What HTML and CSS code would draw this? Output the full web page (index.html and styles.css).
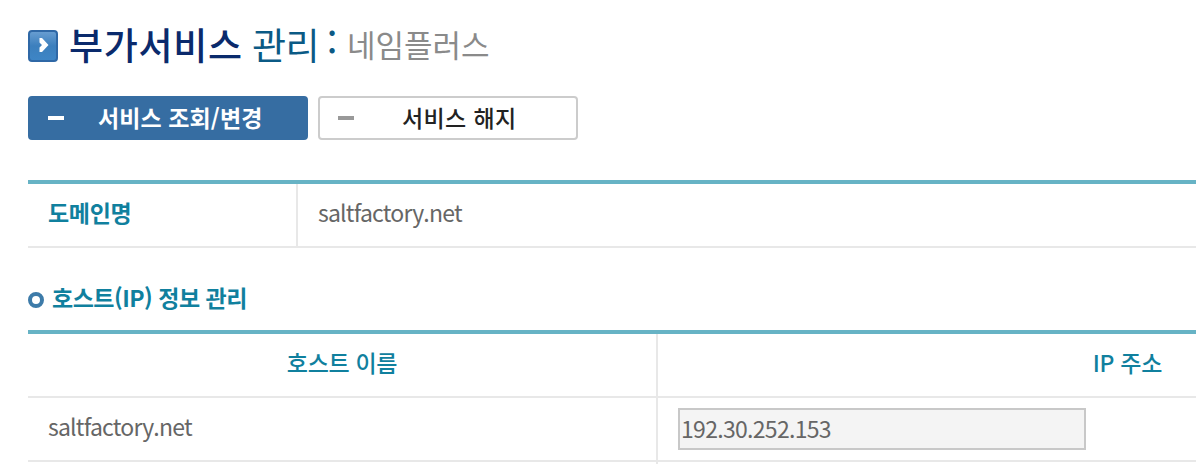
FILE: index.html
```html
<!DOCTYPE html>
<html lang="ko">
<head>
  <meta charset="UTF-8" />
  <meta name="viewport" content="width=device-width, initial-scale=1.0" />
  <title>부가서비스 관리 : 네임플러스</title>
  <link rel="stylesheet" href="styles.css">
</head>
<body>

  <div class="content">
    <h1 class="title">
      <svg class="title-icon" width="30" height="32" viewBox="0 0 30 32">
        <defs>
          <linearGradient id="blue" x1="0" y1="0" x2="0" y2="1">
            <stop offset="0" stop-color="#6a9fd2" />
            <stop offset="0.5" stop-color="#3c7fbd" />
            <stop offset="1" stop-color="#3e86c6" />
          </linearGradient>
        </defs>
        <rect x="1" y="1" width="28" height="30" rx="3" fill="url(#blue)" stroke="#2f68a6" stroke-width="2" />
        <path d="M11.5 8 H14 L20.5 15 L14 22 H11.5 V17.5 L14 15 L11.5 12.5 Z" fill="#fff" />
      </svg>
      <span class="title-service">부가서비스</span>
      <span class="title-manage">관리</span>
      <span class="title-colon">:</span>
      <span class="title-name">네임플러스</span>
    </h1>

    <div class="tabs">
      <a class="tab tab-on"><i class="dash"></i><span>서비스 조회/변경</span></a>
      <a class="tab"><i class="dash"></i><span>서비스 해지</span></a>
    </div>

    <table class="table domain">
      <tr>
        <th>도메인명</th>
        <td>saltfactory.net</td>
      </tr>
    </table>

    <h2 class="subtitle"><i class="bullet"></i><span>호스트(IP) 정보 관리</span></h2>

    <table class="table host">
      <tr>
        <th>호스트 이름</th>
        <th class="address">IP 주소</th>
      </tr>
      <tr>
        <td>saltfactory.net</td>
        <td class="field"><input class="ip" type="text" value="192.30.252.153" readonly /></td>
      </tr>
      <tr class="tail">
        <td></td>
        <td></td>
      </tr>
    </table>
  </div>

</body>
</html>
```
FILE: styles.css
```css
html, body {
  margin: 0;
  padding: 0;
}

body {
  font-family: "Noto Sans CJK KR", sans-serif;
  background: #fff;
  color: #666;
}

.content {
  padding: 22px 0 0 28px;
}

.title {
  display: flex;
  align-items: center;
  height: 48px;
  margin: 0;
  font-size: 37px;
  line-height: 44px;
  white-space: nowrap;
}

.title span {
  padding-bottom: 4px;
}

.title-icon {
  display: block;
}

.title-service {
  width: 183px;
  margin-left: 11px;
  font-weight: 500;
  letter-spacing: 0.7px;
  color: #0a2a6c;
}

.title-manage {
  width: 75px;
  font-weight: 400;
  letter-spacing: -0.5px;
  color: #0b5a85;
}

.title .title-colon {
  width: 20px;
  padding-bottom: 8px;
  font-size: 34px;
  font-weight: 500;
  color: #0b5a85;
}

.title-name {
  font-size: 31px;
  font-weight: 400;
  color: #8a8a8a;
}

.tabs {
  display: flex;
  gap: 10px;
  margin-top: 26px;
}

.tab {
  box-sizing: border-box;
  display: flex;
  align-items: center;
  width: 260px;
  height: 44px;
  padding-left: 18px;
  border: 2px solid #ccc;
  border-radius: 4px;
  font-size: 23px;
  font-weight: 500;
  letter-spacing: 0.4px;
  line-height: 30px;
  color: #222;
}

.tab span {
  margin-left: 48px;
  padding-bottom: 2px;
}

.tab-on {
  width: 280px;
  border-color: #366da2;
  background: #366da2;
  font-weight: 700;
  letter-spacing: 0.1px;
  color: #fff;
}

.tab-on span {
  margin-left: 34px;
}

.dash {
  width: 16px;
  height: 4px;
  background: #999;
}

.tab-on .dash {
  background: #fff;
}

.table {
  width: 100%;
  border-top: 4px solid #67b3c5;
  border-spacing: 0;
  table-layout: fixed;
}

.table th,
.table td {
  box-sizing: border-box;
  height: 64px;
  padding: 0 20px 7px;
  border-bottom: 2px solid #e8e8e8;
  font-size: 23px;
  line-height: 30px;
}

.table th {
  letter-spacing: -0.3px;
  color: #10809e;
}

.table td {
  font-weight: 400;
  letter-spacing: -0.8px;
}

.table th:first-child,
.table td:first-child {
  border-right: 2px solid #e8e8e8;
}

.domain {
  margin-top: 40px;
}

.domain th {
  width: 270px;
  text-align: left;
}

.host th {
  font-weight: 500;
}

.host th:first-child {
  width: 630px;
}

.host .address {
  padding-right: 34px;
  text-align: right;
}

.host .field {
  padding-bottom: 0;
}

.host .tail td {
  height: 2px;
  padding: 0;
  border-bottom: 0;
}

.subtitle {
  display: flex;
  align-items: center;
  height: 36px;
  margin: 32px 0 14px;
  font-size: 23px;
  letter-spacing: -0.5px;
  line-height: 34px;
  color: #10809e;
}

.subtitle span {
  padding-bottom: 2px;
}

.bullet {
  box-sizing: border-box;
  width: 16px;
  height: 16px;
  margin: 3px 8px 0 0;
  border: 4px solid #3d7ba9;
  border-radius: 50%;
}

.ip {
  box-sizing: border-box;
  display: block;
  width: 408px;
  height: 42px;
  padding: 0 2px 3px 1px;
  border: 2px solid #c8c8c8;
  background: #f4f4f4;
  color: #666;
  font-family: inherit;
  font-size: 23px;
  letter-spacing: -0.7px;
}
```
